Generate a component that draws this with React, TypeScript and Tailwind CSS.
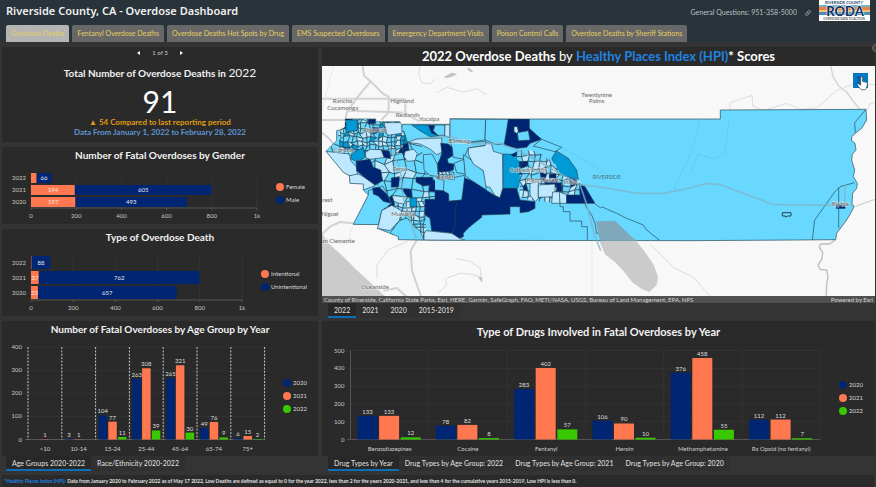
import type { ReactNode } from "react";
import { Link } from "lucide-react";

const NAVY = "#002673";
const CORAL = "#ff7850";
const GREEN = "#38c800";
const PALE = "#bee8ff";
const LIGHT = "#68d8ff";
const MID = "#009bd6";

const pages = [
  "Overdose Deaths",
  "Fentanyl Overdose Deaths",
  "Overdose Deaths Hot Spots by Drug",
  "EMS Suspected Overdoses",
  "Emergency Department Visits",
  "Poison Control Calls",
  "Overdose Deaths by Sheriff Stations",
];

function Panel({ children }: { children: ReactNode }) {
  return <section className="bg-[#2a2a2a]">{children}</section>;
}

function Title({ children }: { children: ReactNode }) {
  return <h2 className="text-center text-[10px] leading-4 font-bold text-[#f2f2f2]">{children}</h2>;
}

function Tabs({ label, items }: { label: string; items: string[] }) {
  return (
    <div role="tablist" aria-label={label} className="flex text-[7px] leading-3 font-medium text-[#dcdcdc]">
      {items.map((item, i) => (
        <button
          key={item}
          type="button"
          role="tab"
          aria-selected={i === 0}
          className={
            i === 0
              ? "border-b-2 border-[#0b6fb8] bg-[#282828] px-1.5 pt-px whitespace-nowrap"
              : "border-b-2 border-[#303030] bg-[#303030] px-1.5 pt-px whitespace-nowrap"
          }
        >
          {item}
        </button>
      ))}
    </div>
  );
}

function Legend({ x, y, items }: { x: number; y: number; items: [string, string][] }) {
  return (
    <g>
      {items.map(([name, color], i) => (
        <g key={name}>
          <circle cx={x} cy={y + i * 13} r={4} fill={color} />
          <text x={x + 6} y={y + i * 13 + 2} fontSize={6} fill="#d8d8d8">
            {name}
          </text>
        </g>
      ))}
    </g>
  );
}

type StackRow = { year: string; values: number[]; labels: string[] };

function StackedBars(props: {
  label: string;
  top: number;
  height: number;
  firstBar: number;
  barHeight: number;
  step: number;
  axisWidth: number;
  rows: StackRow[];
  legend: { x: number; y: number; items: [string, string][] };
}) {
  const { label, top, height, firstBar, barHeight, step, axisWidth, rows, legend } = props;
  const left = 31;
  const base = firstBar + step * 2 + barHeight + 1;
  return (
    <svg role="img" aria-label={label} viewBox={`2 ${top} 316 ${height}`} className="block h-auto w-full">
      {[0, 200, 400, 600, 800, 1000].map((v) => {
        const x = left + (v / 1000) * axisWidth;
        return (
          <g key={v}>
            <line x1={x} x2={x} y1={firstBar} y2={base} stroke="#343434" />
            <line x1={x} x2={x} y1={base} y2={base + 2} stroke="#555" />
            <text x={x} y={base + 10} fontSize={6} fill="#c8c8c8" textAnchor="middle">
              {v === 1000 ? "1k" : v}
            </text>
          </g>
        );
      })}
      <line x1={left} x2={left + axisWidth} y1={base} y2={base} stroke="#555" />
      {rows.map((row, i) => {
        const y = firstBar + i * step;
        const first = (row.values[0] / 1000) * axisWidth;
        const second = (row.values[1] / 1000) * axisWidth;
        return (
          <g key={row.year} fontSize={6} textAnchor="middle">
            <text x={26} y={y + barHeight / 2 + 2} fill="#c8c8c8" textAnchor="end">
              {row.year}
            </text>
            <rect x={left} y={y} width={first} height={barHeight} fill={CORAL} />
            <rect x={left + first} y={y} width={second} height={barHeight} fill={NAVY} />
            <text x={left + first / 2} y={y + barHeight / 2 + 2} fill="#ffe6dd">
              {row.labels[0]}
            </text>
            <text x={left + first + second / 2} y={y + barHeight / 2 + 2} fill="#e6e6ee">
              {row.labels[1]}
            </text>
          </g>
        );
      })}
      <Legend {...legend} />
    </svg>
  );
}

type Group = { name: string; values: (number | null)[] };

function GroupedBars(props: {
  label: string;
  viewBox: string;
  left: number;
  groupWidth: number;
  top: number;
  base: number;
  max: number;
  offset: number;
  barWidth: number;
  step: number;
  dashed?: boolean;
  groups: Group[];
  legend: { x: number; y: number };
}) {
  const { label, viewBox, left, groupWidth, top, base, max, offset, barWidth, step, dashed, groups, legend } = props;
  const right = left + groupWidth * groups.length;
  const scale = (base - top) / max;
  const ticks = Array.from({ length: max / 100 + 1 }, (_, i) => i * 100);
  const colors = [NAVY, CORAL, GREEN];
  return (
    <svg role="img" aria-label={label} viewBox={viewBox} className="block h-auto w-full">
      {ticks.map((t) => (
        <g key={t}>
          <line x1={left - 3} x2={right} y1={base - t * scale} y2={base - t * scale} stroke={t ? "#323232" : "#555"} />
          <text x={left - 6} y={base - t * scale + 2} fontSize={6} fill="#c8c8c8" textAnchor="end">
            {t}
          </text>
        </g>
      ))}
      {Array.from({ length: groups.length + 1 }, (_, i) => {
        const x = left + i * groupWidth;
        return dashed ? (
          <line key={i} x1={x} x2={x} y1={top} y2={base} stroke="#c8c8c8" strokeDasharray="2 1.4" />
        ) : (
          <line key={i} x1={x} x2={x} y1={top} y2={base} stroke={i ? "#323232" : "#555"} />
        );
      })}
      {groups.map((g, i) => {
        const start = left + i * groupWidth;
        return (
          <g key={g.name} fontSize={6} textAnchor="middle">
            <text x={start + groupWidth / 2} y={base + 11} fill="#d0d0d0">
              {g.name}
            </text>
            {g.values.map((v, k) =>
              v === null ? null : (
                <g key={k}>
                  <rect x={start + offset + k * step} y={base - v * scale} width={barWidth} height={v * scale} fill={colors[k]} />
                  <text x={start + offset + k * step + barWidth / 2} y={base - v * scale - 2} fill="#dedede">
                    {v}
                  </text>
                </g>
              ),
            )}
          </g>
        );
      })}
      <Legend {...legend} items={[["2020", NAVY], ["2021", CORAL], ["2022", GREEN]]} />
    </svg>
  );
}

/* Irregular tract mesh: a lattice whose shared corners are nudged by a fixed hash. */
function hash(a: number, b: number) {
  const s = Math.sin(a * 127.1 + b * 311.7) * 43758.5453;
  return s - Math.floor(s);
}

function Mesh(props: { x: number; y: number; cols: number; rows: number; size: number; seed: number; palette: string[] }) {
  const { x, y, cols, rows, size, seed, palette } = props;
  const corner = (c: number, r: number) =>
    `${(x + (c + (hash(c + seed, r) - 0.5) * 0.8) * size).toFixed(1)},${(y + (r + (hash(r, c + seed * 2) - 0.5) * 0.8) * size).toFixed(1)}`;
  const cells = [];
  for (let r = 0; r < rows; r++) {
    for (let c = 0; c < cols; c++) {
      const color = palette[Math.floor(hash(c * 3 + seed, r * 7 + 1) * palette.length)];
      cells.push(
        <polygon
          key={`${c}-${r}`}
          points={`${corner(c, r)} ${corner(c + 1, r)} ${corner(c + 1, r + 1)} ${corner(c, r + 1)}`}
          fill={color}
        />,
      );
    }
  }
  return <g>{cells}</g>;
}

const COUNTY =
  "76,165 167,165 167,173 240,173 242,181 390,181 390,164 600,165 1201,165 1201,138 1638,136 1640,168 1625,193 1608,206 1595,218 1595,230 1605,238 1608,258 1597,271 1595,288 1604,318 1600,338 1612,358 1610,373 1598,388 1596,418 1602,428 1592,448 1580,468 1565,488 1550,508 1547,527 1440,528 1110,530 340,529 235,527 235,518 172,493 176,482 100,481 145,393 130,378 130,360 90,358 88,335 70,325 18,262 50,230 50,200 60,198 76,190";

const tracts: [string, string][] = [
  [PALE, "18,262 88,270 92,290 110,310 112,335 88,335 70,325"],
  [PALE, "88,335 115,330 160,355 165,365 130,378 130,360 90,358"],
  [LIGHT, "145,380 188,366 200,385 215,418 185,440 176,482 100,481 145,393"],
  [PALE, "185,440 215,424 245,440 238,470 210,500 172,493 176,482"],
  [LIGHT, "238,470 262,462 285,490 300,500 312,528 235,527 235,518 210,508"],
  [NAVY, "158,372 178,370 200,390 214,418 190,412 175,396 160,390"],
  [MID, "95,268 130,250 136,280 110,292 92,285"],
  [PALE, "136,266 150,256 195,258 198,280 150,286 138,282"],
  [NAVY, "108,292 150,286 160,310 182,318 188,350 165,363 140,345 110,320"],
  [PALE, "192,176 245,176 246,208 202,214"],
  [NAVY, "145,166 167,166 167,178 145,180"],
  [MID, "78,168 112,168 112,200 78,204"],
  [MID, "275,183 330,183 335,205 355,216 330,218 300,200"],
  [NAVY, "325,184 345,184 340,200 354,214 335,208"],
  [LIGHT, "345,183 375,183 374,214 354,214 340,200"],
  [PALE, "375,182 390,182 390,222 374,214"],
  [PALE, "262,235 290,225 365,222 366,265 350,272 330,255 300,240"],
  [PALE, "255,262 280,256 292,268 285,290 262,292 252,278"],
  [NAVY, "184,258 208,262 212,284 192,280"],
  [NAVY, "214,342 238,338 236,368 214,370"],
  [LIGHT, "390,165 497,166 495,228 440,236 390,226"],
  [LIGHT, "497,166 568,166 560,215 555,240 530,242 495,228"],
  [LIGHT, "388,226 440,236 497,232 497,244 445,252 430,285 400,280 396,250"],
  [NAVY, "362,238 385,240 396,250 398,275 382,285 385,298 402,300 400,318 375,325 370,345 352,345 355,320 352,300 360,285 366,265"],
  [LIGHT, "310,272 336,270 352,300 354,338 330,334 312,318"],
  [LIGHT, "402,298 432,286 436,330 410,326"],
  [NAVY, "288,340 338,340 338,362 310,366 288,354"],
  [LIGHT, "372,346 434,334 432,376 430,408 386,412 384,390 370,386"],
  [LIGHT, "430,272 450,285 500,330 498,377 455,350 436,335"],
  [PALE, "445,252 495,245 497,236 515,240 520,262 548,270 549,370 540,402 525,395 510,370 498,368 490,320 460,300 445,270"],
  [MID, "549,270 598,272 600,350 592,374 549,374"],
  [
    NAVY,
    "434,342 455,350 498,378 525,395 540,402 549,373 590,373 600,408 645,413 645,433 625,443 600,446 600,428 570,428 570,450 485,453 485,460 462,478 445,492 430,508 430,518 418,523 395,508 335,500 330,463 315,453 315,406 345,406 345,378 370,380 386,390 386,412 425,408",
  ],
  [PALE, "318,500 395,508 418,523 436,529 312,528 312,510"],
  [MID, "270,402 290,402 290,428 270,428"],
  [NAVY, "565,165 628,165 628,193 650,213 665,226 630,238 620,250 590,253 552,243 560,198"],
  [PALE, "582,188 592,188 595,203 590,208 582,203"],
  [LIGHT, "592,206 625,200 630,228 595,230"],
  [LIGHT, "665,226 725,250 705,263 640,246"],
  [MID, "708,260 745,283 770,318 775,346 720,333 705,303 695,283 705,268"],
];

const coachella: [string, string][] = [
  [PALE, "630,358 655,353 655,403 645,413 630,393"],
  [PALE, "655,363 705,360 705,398 655,400"],
  [PALE, "698,384 720,383 720,418 695,418"],
  [PALE, "718,384 740,392 740,418 720,418"],
  [NAVY, "778,358 795,368 825,418 740,418 740,393 780,393"],
  [NAVY, "710,356 724,356 724,382 710,382"],
  [NAVY, "688,330 708,330 708,342 688,342"],
];

const places: [string, number, number][] = [
  ["Rancho", 68, 118],
  ["Cucamonga", 68, 138],
  ["Highland", 246, 118],
  ["Redlands", 263, 158],
  ["Yucaipa", 327, 170],
  ["Riverside", 165, 204],
  ["Corona", 70, 264],
  ["Banning", 418, 236],
  ["Perris", 240, 322],
  ["Hemet", 374, 344],
  ["Murrieta", 248, 456],
  ["Niguel", 30, 457],
  ["rest", 22, 415],
  ["an Clemente", 54, 536],
  ["Oceanside", 165, 675],
  ["Cathedral City", 625, 324],
  ["Palm Desert", 668, 354],
  ["Indio", 750, 359],
  ["Twentynine", 830, 100],
  ["Palms", 830, 118],
  ["Blythe", 1561, 426],
];

function CountyMap() {
  return (
    <svg role="img" aria-label="Riverside County census tracts by HPI score" viewBox="6 6 1659 711" className="block h-auto w-full">
      <defs>
        <clipPath id="county">
          <polygon points={COUNTY} />
        </clipPath>
        <clipPath id="west">
          <polygon points="76,165 167,165 245,176 262,232 305,245 310,320 345,350 345,406 315,410 318,500 312,528 235,527 176,482 200,400 160,350 108,292 18,262 50,230 60,198" />
        </clipPath>
        <clipPath id="valley">
          <polygon points="600,258 650,262 706,300 722,334 778,350 800,380 780,410 690,415 640,410 600,400 598,290 572,272" />
        </clipPath>
      </defs>
      <rect x="6" y="6" width="1659" height="711" fill="#f8f8f8" />
      <path d="M6 508 25 538 70 578 110 618 165 668 215 717H6Z" fill="#cbcbcb" />
      <g fill="none" stroke="#d2d2d2" strokeWidth="6" strokeLinejoin="round">
        <path d="M128 6 132 35 152 52 190 90 206 98 206 145 184 168" />
        <path d="M6 104H200L256 106 256 150 300 172" />
        <path d="M6 168H78M86 140 206 144 250 146M152 52 112 100 80 146 76 168" />
        <path d="M6 206 30 226 46 250M6 510 30 488 60 474 100 478" />
        <path d="M290 528 272 560 276 620 290 660 310 717M190 680 230 672 262 700" />
        <path d="M1532 6 1540 40 1556 66 1580 84 1600 112 1622 138M1604 428 1665 406" strokeWidth="4" />
      </g>
      <g fill="none" stroke="#dcdcdc" strokeWidth="3">
        <path d="M300 6 296 30 306 56 330 60 346 44M350 86 380 70 430 84 470 74 500 92" />
        <path d="M170 640 172 600 206 556 262 532M356 686 380 664 376 644 420 628 450 630 484 640 480 612 450 592 410 584" />
        <path d="M1228 166 1230 116 1296 94 1298 126 1330 140 1400 118 1440 136 1490 132 1550 80 1600 60 1665 62" />
        <path d="M990 540 1060 610 1120 640 1180 706M1640 138 1650 120 1665 116" />
        <path d="M40 6 6 140M816 534V717M20 524 80 540 100 482" strokeDasharray="5 5" />
      </g>
      <path d="M370 40 395 26 412 30 396 38 380 42ZM440 14 448 12 460 24 452 24ZM474 640 487 640 486 656Z" fill="#c2c2c2" />
      <path d="M1547 527 1528 540 1502 540 1498 550 1508 566 1506 584 1494 604 1500 616 1520 618 1524 640 1520 660 1518 717" fill="none" stroke="#bdbdbd" strokeWidth="4" />

      <polygon points={COUNTY} fill={LIGHT} stroke="#274652" strokeWidth="2" />
      <g clipPath="url(#county)" stroke="#274652" strokeWidth="2" strokeLinejoin="round">
        <g clipPath="url(#west)">
          <Mesh x={10} y={160} cols={13} rows={15} size={27} seed={4} palette={[LIGHT, LIGHT, PALE, PALE, LIGHT, NAVY, LIGHT]} />
          <Mesh x={60} y={168} cols={14} rows={8} size={13} seed={9} palette={[LIGHT, PALE, LIGHT, MID, LIGHT, PALE, NAVY, LIGHT]} />
          <Mesh x={228} y={205} cols={3} rows={5} size={12} seed={5} palette={[NAVY, LIGHT, MID, PALE]} />
          <Mesh x={220} y={416} cols={8} rows={8} size={13} seed={2} palette={[LIGHT, PALE, PALE, LIGHT]} />
        </g>
        {tracts.map(([fill, points]) => (
          <polygon key={points} points={points} fill={fill} />
        ))}
        <g>
          <Mesh x={356} y={322} cols={4} rows={2} size={11} seed={7} palette={[LIGHT, PALE]} />
        </g>
        <g clipPath="url(#valley)">
          <Mesh x={568} y={256} cols={12} rows={9} size={18} seed={3} palette={[LIGHT, PALE, PALE, LIGHT, NAVY, LIGHT, LIGHT]} />
        </g>
        {coachella.map(([fill, points]) => (
          <polygon key={points} points={points} fill={fill} />
        ))}
        <g fill="none">
          <path d="M720 418V428H730V443H750V471H785V488H802V530" />
          <path d="M825 420 842 432 846 428 862 436 890 448 920 463 970 483 980 498 1020 530" />
          <path d="M790 398 798 428 815 453 825 478 830 508H843V530M410 416 404 450 406 480 396 508" />
          <path d="M1638 136 1604 176 1606 206M1604 356 1560 368 1544 384 1510 432 1484 468 1477 528M1556 370V492" />
          <path d="M1387 446H1413V456H1402L1398 460 1396 456H1387Z" strokeWidth="3" />
        </g>
      </g>
      <path d="M828 472 885 470 910 494 936 519 950 530H840Z" fill="#7fa9ba" />
      <path d="M838 531H948L975 564 1002 604 1014 640 1010 664 988 684 966 676 936 654 910 620 885 594 856 572Z" fill="#cbcbcb" />
      <g fill="none" stroke="#7fb3c8" strokeOpacity="0.75" strokeWidth="5">
        <path d="M300 222 390 218 460 240 540 238 600 262 680 306 780 362 860 372 950 388 1030 388 1110 372 1160 358 1200 362 1362 422 1600 424" />
        <path d="M780 362 800 420 812 470 826 520 842 560M206 250 240 310 250 400 290 528M1574 364V420" />
      </g>
      <g fill="none" stroke="#5fc4e8" strokeWidth="2">
        <path d="M1110 330 1134 270 1180 284 1214 268 1228 166M725 250 860 330M1060 378 1120 250 1140 166" />
      </g>
      <rect x="1548" y="422" width="28" height="12" fill={NAVY} />
      <g fontSize="18" fill="#6b6b6b" textAnchor="middle" stroke="#f0f0f0" strokeOpacity="0.55" strokeWidth="4" paintOrder="stroke">
        {places.map(([name, x, y]) => (
          <text key={name} x={x} y={y}>
            {name}
          </text>
        ))}
      </g>
      <text x="860" y="346" fontSize="17" fill="#47717f" textAnchor="middle">
        RIVERSIDE
      </text>
    </svg>
  );
}

function Logo() {
  return (
    <svg role="img" aria-label="Riverside County RODA, Overdose Data to Action" viewBox="0 0 51 21" className="h-[21px] w-[51px] shrink-0 self-start">
      <rect width="51" height="21" fill="#fff" />
      <rect y="5" width="51" height="2" fill="#7ab3c8" />
      <rect y="7" width="51" height="3" fill="#e8804a" />
      <rect y="10" width="51" height="2" fill="#f3c27a" />
      <rect y="12" width="51" height="3" fill="#4f8fb5" />
      <g textAnchor="middle" fill="#1d3f6e" fontWeight="bold">
        <text x="25" y="4" fontSize="4">
          RIVERSIDE COUNTY
        </text>
        <text x="26" y="16" fontSize="13" fontWeight="900" fill="#12396b" stroke="#fff" strokeWidth="1" paintOrder="stroke">
          RODA
        </text>
        <text x="25" y="20" fontSize="3" fill="#555">
          OVERDOSE DATA TO ACTION
        </text>
      </g>
    </svg>
  );
}

export default function App() {
  return (
    <div className="min-h-screen bg-[#343434] font-['Lato','Noto_Sans',sans-serif] text-white">
      <header className="bg-[#28333a]">
        <div className="flex h-[25px] items-center pr-1.5 pl-1.5">
          <h1 className="grow pb-1 font-['Noto_Sans','Open_Sans',sans-serif] text-[11px] leading-5 font-semibold text-[#f0f0f0]">
            Riverside County, CA - Overdose Dashboard
          </h1>
          <p className="text-[7px] text-[#b9c0c4]">General Questions: 951-358-5000</p>
          <a href="#share" aria-label="Copy link" className="mx-2 text-[#b9c0c4]">
            <Link size={6} strokeWidth={3} />
          </a>
          <Logo />
        </div>
        <nav aria-label="Dashboard pages" className="flex gap-[3px] px-1.5">
          {pages.map((page, i) => (
            <a
              key={page}
              href="#page"
              className={
                i === 0
                  ? "rounded-t-xs bg-[#b4b4b4] px-[5px] text-[7px] leading-[17px] whitespace-nowrap text-[#e6cf63]"
                  : "rounded-t-xs bg-[#686868] px-[5px] text-[7px] leading-[17px] whitespace-nowrap text-[#e6cf63]"
              }
            >
              {page}
            </a>
          ))}
        </nav>
      </header>

      <main className="relative grid grid-cols-[minmax(0,316fr)_minmax(0,553fr)] gap-x-1 overflow-hidden pt-[5px] pr-px pl-0.5">
        <button
          type="button"
          aria-label="Expand map"
          className="absolute top-0.5 -right-1 h-2 w-2 rounded-full border border-[#6a6a6a] bg-[#444]"
        />
        <div>
          <div className="flex flex-col gap-[5px]">
            <Panel>
              <div className="flex flex-col items-center pt-0.5 pb-[5px]">
                <div className="flex h-2 items-center gap-3 text-[6px] leading-2 text-[#c8c8c8]">
                  <button type="button" aria-label="Previous" className="h-0 w-0 border-y-2 border-r-3 border-y-transparent border-r-white" />
                  <span>1 of 3</span>
                  <button type="button" aria-label="Next" className="h-0 w-0 border-y-2 border-l-3 border-y-transparent border-l-white" />
                </div>
                <h2 className="mt-2 text-[10px] leading-4 font-bold text-[#f2f2f2]">
                  Total Number of Overdose Deaths in <span className="text-[12px] font-normal">2022</span>
                </h2>
                <p className="mt-1 text-[30px] leading-8">91</p>
                <p className="text-[8px] leading-[10px] font-bold text-[#e09a10]">▲ 54 Compared to last reporting period</p>
                <p className="text-[8px] leading-[10px] font-bold text-[#5f95d6]">Data From January 1, 2022 to February 28, 2022</p>
              </div>
            </Panel>
            <Panel>
              <Title>Number of Fatal Overdoses by Gender</Title>
              <StackedBars
                label="Fatal overdoses by gender"
                top={163}
                height={61}
                firstBar={173}
                barHeight={10}
                step={12}
                axisWidth={226}
                rows={[
                  { year: "2022", values: [25, 66], labels: ["", "66"] },
                  { year: "2021", values: [194, 605], labels: ["194", "605"] },
                  { year: "2020", values: [197, 493], labels: ["197", "493"] },
                ]}
                legend={{ x: 280, y: 187, items: [["Female", CORAL], ["Male", NAVY]] }}
              />
            </Panel>
            <Panel>
              <Title>Type of Overdose Death</Title>
              <StackedBars
                label="Fatal overdoses by intent"
                top={245}
                height={71}
                firstBar={256}
                barHeight={13}
                step={15}
                axisWidth={211}
                rows={[
                  { year: "2022", values: [3, 88], labels: ["", "88"] },
                  { year: "2021", values: [37, 762], labels: ["37", "762"] },
                  { year: "2020", values: [33, 657], labels: ["33", "657"] },
                ]}
                legend={{ x: 265, y: 274, items: [["Intentional", CORAL], ["Unintentional", NAVY]] }}
              />
            </Panel>
            <Panel>
              <Title>Number of Fatal Overdoses by Age Group by Year</Title>
              <GroupedBars
                label="Fatal overdoses by age group"
                viewBox="2 337 316 119"
                left={28}
                groupWidth={33.8}
                top={347}
                base={439.5}
                max={400}
                offset={3}
                barWidth={8.5}
                step={9.7}
                dashed
                groups={[
                  { name: "<10", values: [null, 1, null] },
                  { name: "10-14", values: [3, 1, null] },
                  { name: "15-24", values: [104, 77, 11] },
                  { name: "25-44", values: [263, 308, 39] },
                  { name: "45-64", values: [265, 321, 30] },
                  { name: "65-74", values: [49, 76, 9] },
                  { name: "75+", values: [6, 15, 2] },
                ]}
                legend={{ x: 287, y: 383 }}
              />
            </Panel>
          </div>
          <div className="px-1">
            <Tabs label="Demographic views" items={["Age Groups 2020-2022", "Race/Ethnicity 2020-2022"]} />
          </div>
        </div>

        <div>
          <Panel>
            <h2 className="text-center text-[13px] leading-[19px] font-bold">
              2022 Overdose Deaths <span className="font-normal">by</span>{" "}
              <a href="#hpi" className="text-[#1f83e0]">
                Healthy Places Index (HPI)
              </a>
              * Scores
            </h2>
            <div className="relative">
              <CountyMap />
              <button type="button" aria-label="Map legend" className="absolute top-[7px] right-[7px] h-[15px] w-[15px] bg-[#0079c8]">
                <svg viewBox="0 0 45 45" className="block h-full w-full overflow-visible">
                  <path d="M12 13H24M12 21H22M12 29H20" stroke="#083a66" strokeWidth="3" />
                  <path
                    d="M23 14C23 10 29 10 29 14V25L40 28C43 29 44 32 43 36L40 46C39 49 37 50 34 50H27C24 50 22 48 20 45L13 36C12 33 15 31 18 33L23 37Z"
                    fill="#fff"
                    stroke="#333"
                    strokeWidth="2"
                  />
                </svg>
              </button>
              <div className="absolute inset-x-0 bottom-0 flex justify-between bg-[#505050] px-0.5 text-[6px] leading-[7px] text-[#d4d4d4]">
                <span>
                  County of Riverside, California State Parks, Esri, HERE, Garmin, SafeGraph, FAO, METI/NASA, USGS, Bureau of Land Management, EPA, NPS
                </span>
                <span>Powered by Esri</span>
              </div>
            </div>
          </Panel>
          <div className="px-1.5">
            <Tabs label="Map years" items={["2022", "2021", "2020", "2015-2019"]} />
          </div>
          <div className="mt-[3px]">
            <Panel>
              <h2 className="pt-[3px] text-center text-[11px] leading-4 font-bold text-[#f2f2f2]">
                Type of Drugs Involved in Fatal Overdoses by Year
              </h2>
              <GroupedBars
                label="Drugs involved in fatal overdoses"
                viewBox="322 340 553 116"
                left={350.5}
                groupWidth={78.3}
                top={350.5}
                base={439.5}
                max={500}
                offset={7}
                barWidth={20}
                step={21.6}
                groups={[
                  { name: "Benzodiazepines", values: [133, 133, 12] },
                  { name: "Cocaine", values: [78, 82, 8] },
                  { name: "Fentanyl", values: [283, 402, 57] },
                  { name: "Heroin", values: [106, 90, 10] },
                  { name: "Methamphetamine", values: [376, 458, 55] },
                  { name: "Rx Opoid (no fentanyl)", values: [112, 112, 7] },
                ]}
                legend={{ x: 843, y: 385 }}
              />
            </Panel>
          </div>
          <div className="px-1.5">
            <Tabs
              label="Drug views"
              items={["Drug Types by Year", "Drug Types by Age Group: 2022", "Drug Types by Age Group: 2021", "Drug Types by Age Group: 2020"]}
            />
          </div>
        </div>
      </main>

      <footer className="mx-0.5 mt-1 bg-[#2a2a2a] px-0.5 text-[5px] leading-3 font-bold text-[#e0e0e0]">
        <a href="#hpi" className="text-[#1f83e0]">
          *Healthy Places Index (HPI):
        </a>{" "}
        Data from January 2020 to February 2022 as of May 17 2022, Low Deaths are defined as equal to 0 for the year 2022, less than 2 for the years 2020-2021, and less
        than 4 for the cumulative years 2015-2019, Low HPI is less than 0.
      </footer>
    </div>
  );
}
